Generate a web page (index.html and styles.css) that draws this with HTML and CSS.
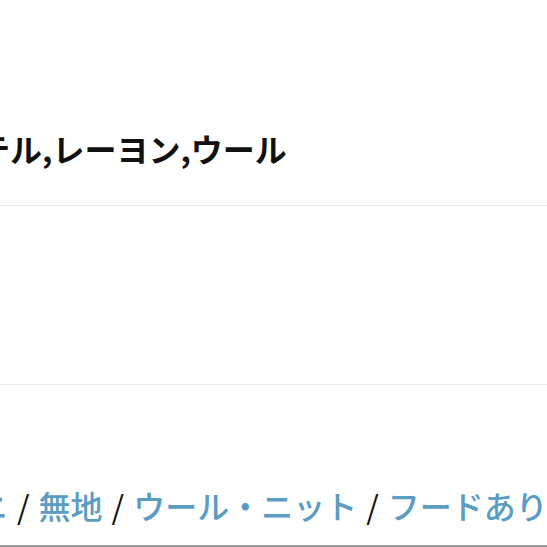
FILE: index.html
```html
<!DOCTYPE html>
<html lang="ja">
<head>
<meta charset="utf-8">
<link rel="stylesheet" href="styles.css">
</head>
<body>
<div class="page">
  <div class="row row-material">
    <p class="value material">ポリエステル,レーヨン,ウール</p>
  </div>
  <div class="row row-empty"></div>
  <div class="row row-tags">
    <p class="value tags"><a class="tag">ミニ</a><span class="sep">/</span><a class="tag">無地</a><span class="sep">/</span><a class="tag">ウール・ニット</a><span class="sep">/</span><a class="tag">フードあり</a></p>
  </div>
</div>
</body>
</html>
```
FILE: styles.css
```css
html, body {
  margin: 0;
  padding: 0;
  background: #fff;
}
.page {
  width: 547px;
  height: 547px;
  overflow: hidden;
  display: flex;
  flex-direction: column;
  font-family: "Noto Sans CJK JP", "Noto Sans", sans-serif;
}
.row {
  flex: none;
  display: flex;
  align-items: flex-end;
}
.row-material {
  height: 205px;
  border-bottom: 1px solid #ececec;
}
.row-empty {
  height: 178px;
  border-bottom: 1px solid #ececec;
}
.row-tags {
  height: 160px;
  border-bottom: 2px solid #9a9a9a;
}
.value {
  margin: 0;
  white-space: nowrap;
  line-height: 1;
  color: #111;
  display: flex;
  align-items: baseline;
}
.material {
  font-size: 32px;
  font-weight: 700;
  margin-left: -150px;
  padding-bottom: 41px;
}
.tags {
  font-size: 32px;
  font-weight: 500;
  margin-left: -56px;
  padding-bottom: 24px;
}
.tag {
  color: #5a9cc2;
  text-decoration: none;
}
.sep {
  color: #111;
  font-weight: 400;
  margin: 0 9px;
}
```
